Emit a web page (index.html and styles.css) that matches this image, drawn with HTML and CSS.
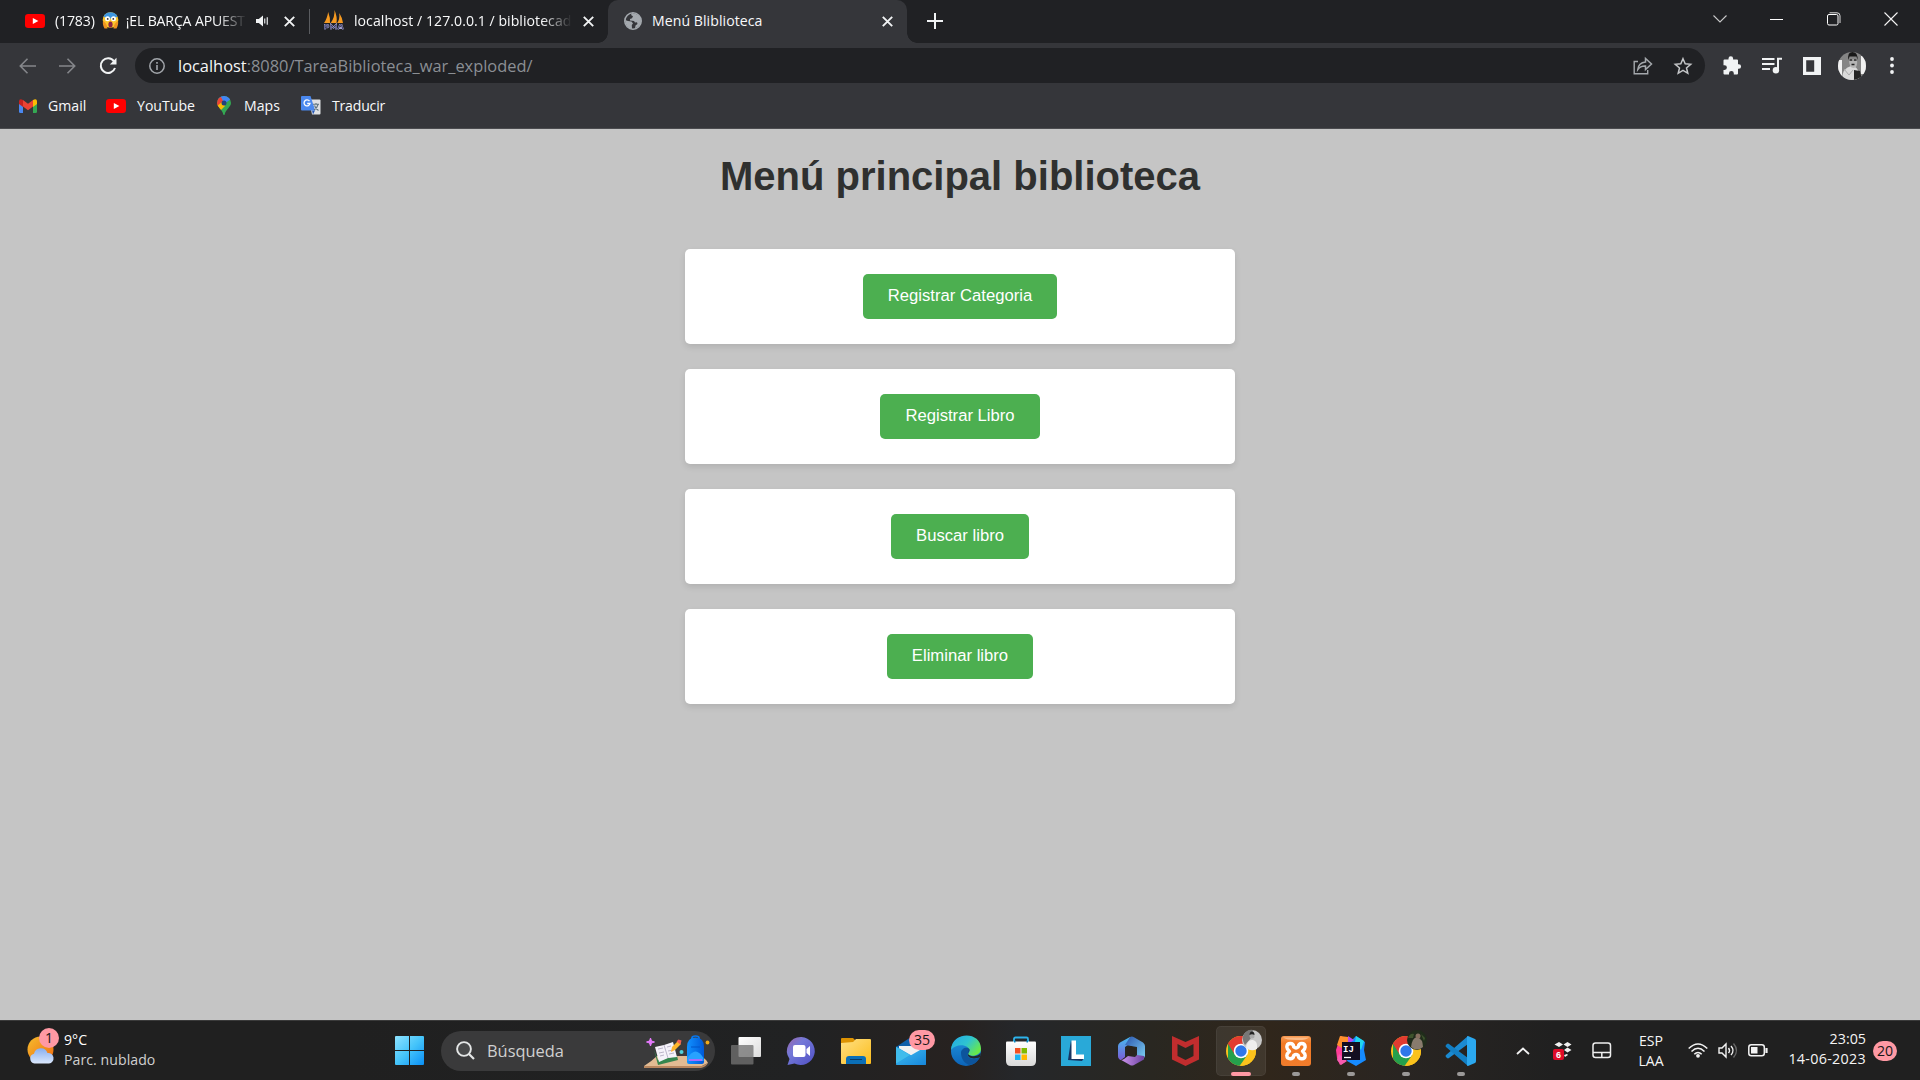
FILE: index.html
```html
<!DOCTYPE html>
<html lang="es">
<head>
<meta charset="utf-8">
<title>Menú Bliblioteca</title>
<link rel="stylesheet" href="styles.css">
</head>
<body>
<svg class="defs" width="0" height="0">
  <defs>
    <linearGradient id="gStart" x1="0" y1="0" x2="1" y2="1"><stop offset="0" stop-color="#8ee3ff"/><stop offset=".5" stop-color="#45c4fa"/><stop offset="1" stop-color="#0a8ff5"/></linearGradient>
    <linearGradient id="gSun" x1="0" y1="0" x2="1" y2="1"><stop offset="0" stop-color="#f5bd2e"/><stop offset="1" stop-color="#f0690f"/></linearGradient>
    <linearGradient id="gCloud" x1="0" y1="0" x2="0" y2="1"><stop offset="0" stop-color="#86aef0"/><stop offset="1" stop-color="#dbe8fc"/></linearGradient>
    <linearGradient id="gChat" x1="0" y1="0" x2="1" y2="1"><stop offset="0" stop-color="#9c66a8"/><stop offset=".35" stop-color="#7479d8"/><stop offset="1" stop-color="#4f4fc4"/></linearGradient>
    <linearGradient id="gFolder" x1="0" y1="0" x2="1" y2="1"><stop offset="0" stop-color="#ffe084"/><stop offset="1" stop-color="#fcbd1c"/></linearGradient>
    <linearGradient id="gMail" x1="0" y1="0" x2="1" y2="1"><stop offset="0" stop-color="#43c1ef"/><stop offset="1" stop-color="#1686dc"/></linearGradient>
    <linearGradient id="gEdgeA" x1="0" y1="0" x2="1" y2=".6"><stop offset="0" stop-color="#22a7e6"/><stop offset=".55" stop-color="#2fc4d0"/><stop offset="1" stop-color="#68e84a"/></linearGradient>
    <linearGradient id="gEdgeB" x1="0" y1="0" x2="0" y2="1"><stop offset="0" stop-color="#2196dd"/><stop offset="1" stop-color="#0c64b8"/></linearGradient>
    <linearGradient id="gBag" x1="0" y1="0" x2="0" y2="1"><stop offset="0" stop-color="#ffffff"/><stop offset="1" stop-color="#d9d9d9"/></linearGradient>
    <linearGradient id="gM1" x1="0" y1="0" x2="0" y2="1"><stop offset="0" stop-color="#46bdf0"/><stop offset="1" stop-color="#7a5bd6"/></linearGradient>
    <linearGradient id="gM2" x1="0" y1="0" x2="1" y2="1"><stop offset="0" stop-color="#2a55ae"/><stop offset="1" stop-color="#7fd2f5"/></linearGradient>
    <linearGradient id="gM3" x1="0" y1="0" x2="1" y2="0"><stop offset="0" stop-color="#d49af2"/><stop offset="1" stop-color="#6a419f"/></linearGradient>
    <linearGradient id="gXampp" x1="0" y1="0" x2="0" y2="1"><stop offset="0" stop-color="#f79b55"/><stop offset=".25" stop-color="#f37a24"/><stop offset="1" stop-color="#f07c2c"/></linearGradient>
    <linearGradient id="gView" x1="0" y1="0" x2="1" y2="1"><stop offset="0" stop-color="#ffffff"/><stop offset="1" stop-color="#dcdcdc"/></linearGradient>
    <linearGradient id="gPack" x1="0" y1="0" x2="1" y2="0"><stop offset="0" stop-color="#1191ff"/><stop offset="1" stop-color="#0059d8"/></linearGradient>
    <clipPath id="round30"><circle cx="15" cy="15" r="15"/></clipPath>
    <symbol id="youtube" viewBox="0 0 20 14"><rect width="20" height="14" rx="3.2" fill="#f00"/><path d="M7.8 3.9v6.2L13.4 7z" fill="#fff"/></symbol>
    <symbol id="close" viewBox="0 0 11 11"><path d="M.8.8l9.4 9.4M10.2.8L.8 10.2" stroke="#f1f3f4" stroke-width="1.9" fill="none"/></symbol>
    <symbol id="chrome" viewBox="0 0 30 30">
      <g clip-path="url(#round30)">
        <rect width="30" height="30" fill="#fbc21c"/>
        <path d="M15 15L2 7.5V30H13.500L21.500 18.750z" fill="#25a04c"/>
        <path d="M15 15L21.500 18.750L14.500 31H30V8H15z" fill="#fbc21c"/>
        <path d="M0 0H30V8.200H15L8.700 18.400L1.500 7z" fill="#e23b30"/>
      </g>
      <circle cx="15" cy="15" r="7.300" fill="#fff"/><circle cx="15" cy="15" r="5.700" fill="#2f77ea"/>
    </symbol>
  </defs>
</svg>

<header class="browser">
  <div class="tabs">
    <div class="tab tab-first">
      <svg width="20" height="14"><use href="#youtube"/></svg>
      <div class="tab-title fade title-video"><span>(1783)</span>
        <svg class="emoji" width="17" height="17" viewBox="0 0 17 17"><circle cx="8.500" cy="8" r="7.800" fill="#fcc62c"/><path d="M1.500 4.500A8 8 0 0 1 15.500 4.500L12 6.500H5z" fill="#3e97e0"/><circle cx="5.500" cy="6.700" r="2.500" fill="#fff"/><circle cx="11.500" cy="6.700" r="2.500" fill="#fff"/><circle cx="5.700" cy="6.900" r=".9" fill="#333"/><circle cx="11.300" cy="6.900" r=".9" fill="#333"/><ellipse cx="8.500" cy="12.500" rx="2.100" ry="3" fill="#8d2544"/><path d="M1 9c2 1 4 3 4.500 7.500H2.500C1 14 .5 11 1 9zM16 9c-2 1-4 3-4.500 7.500h3C16 14 16.500 11 16 9z" fill="#ef9420"/></svg>
        <span>¡EL BARÇA APUEST</span></div>
      <svg class="audio" width="13" height="12" viewBox="0 0 13 12"><path d="M0 4h2.800L7 .5v11L2.800 8H0z" fill="#f1f3f4"/><path d="M8.700 3.500v5M11.300 2.200v7.600" stroke="#c8cacc" stroke-width="1.400"/></svg>
      <svg class="tab-close" width="11" height="11"><use href="#close"/></svg>
    </div>
    <div class="tab tab-second">
      <svg width="22" height="22" viewBox="0 0 22 22"><path d="M1 13Q4 9 5.200 2Q7.500 8 7 13zM7.700 13Q12 7 11.500 0Q14.500 7 13.500 13zM14.200 13Q17 9 16.300 3Q19.500 8 20 13z" fill="#f69a21"/><path d="M2 19.500v-4.700h2.500q2 1.400 0 2.500H2M8 19.500v-4.700l2.500 2.800 2.500-2.800v4.700M15 19.500l2-4.700h1.500l1.500 4.700M16 18h3" fill="none" stroke="#a5a5cf" stroke-width="1.800"/><path d="M2 19.500v-4.700h2.500q2 1.400 0 2.500H2M8 19.500v-4.700l2.500 2.800 2.500-2.800v4.700M15 19.500l2-4.700h1.500l1.500 4.700" fill="none" stroke="#2b2b58" stroke-width=".9"/></svg>
      <div class="tab-title fade title-admin">localhost / 127.0.0.1 / bibliotecad</div>
      <svg class="tab-close" width="11" height="11"><use href="#close"/></svg>
    </div>
    <div class="tab tab-active">
      <svg width="18" height="18" viewBox="0 0 18 18"><circle cx="9" cy="9" r="8.200" fill="#35363a" stroke="#a4a9ae" stroke-width="1.600"/><path d="M1 8l3 1 3.500.5 1.500 2-1.200 1.500.2 4Q2 16 1 8zM8 1l-1 2 2 1.300-1 2-2 .7v1.500l4 .5 1 1.500 2-.2.500 1.700-2 1.500-.5 3Q17 14 17 9Q17 2 8 1z" fill="#a4a9ae"/></svg>
      <div class="tab-title title-current">Menú Bliblioteca</div>
      <svg class="tab-close" width="11" height="11"><use href="#close"/></svg>
    </div>
    <svg class="new-tab" width="16" height="16" viewBox="0 0 16 16"><path d="M8 0v16M0 8h16" stroke="#f1f3f4" stroke-width="2"/></svg>
    <div class="window-controls">
      <svg width="14" height="8" viewBox="0 0 14 8"><path d="M.5.500L7 7 13.500.500" fill="none" stroke="#c8c9ca" stroke-width="1.100"/></svg>
      <svg width="14" height="14" viewBox="0 0 14 14"><path d="M0 7.500h13" stroke="#fff"/></svg>
      <svg width="14" height="14" viewBox="0 0 14 14"><rect x=".5" y="2.500" width="10.500" height="10.500" rx="1.500" fill="none" stroke="#fff"/><path d="M2.500.8H10Q13 .8 13 3.800V11" fill="none" stroke="#ddd"/></svg>
      <svg width="14" height="14" viewBox="0 0 14 14"><path d="M.5.500l13 13M13.500.500l-13 13" stroke="#f5f5f5" stroke-width="1.100"/></svg>
    </div>
  </div>

  <div class="toolbar">
    <div class="nav">
      <svg width="17" height="16" viewBox="0 0 17 16"><path d="M17 8H1.500M8.500.8L1.300 8l7.200 7.200" fill="none" stroke="#85878b" stroke-width="1.600"/></svg>
      <svg width="17" height="16" viewBox="0 0 17 16"><path d="M0 8h15.500M8.500.8L15.700 8l-7.200 7.200" fill="none" stroke="#85878b" stroke-width="1.600"/></svg>
      <svg width="18" height="18" viewBox="0 0 18 18"><path d="M15 4.300A7.300 7.300 0 1 0 16 11" fill="none" stroke="#f1f3f4" stroke-width="2"/><path d="M17.500.8v6.700h-6.700z" fill="#f1f3f4"/></svg>
    </div>
    <div class="address">
      <svg width="16" height="16" viewBox="0 0 16 16"><circle cx="8" cy="8" r="7.200" fill="none" stroke="#a2a6ab" stroke-width="1.500"/><path d="M8 7v5M8 4v1.700" stroke="#a2a6ab" stroke-width="1.600"/></svg>
      <div class="url"><span>localhost</span>:8080/TareaBiblioteca_war_exploded/</div>
      <svg class="share" width="20" height="18" viewBox="0 0 20 18"><path d="M5 4.500H1.200v12.200h13.500V13" fill="none" stroke="#a4a8ac" stroke-width="1.400"/><path d="M4.800 12.500Q5.500 5.800 12.500 5V1.500L18.500 7l-6 5.500V9Q7.500 8.700 4.800 12.500z" fill="none" stroke="#a4a8ac" stroke-width="1.500"/></svg>
      <svg width="18" height="18" viewBox="0 0 18 18"><path d="M9 1.700l2.200 5.100 5.500.5-4.200 3.600 1.300 5.400L9 13.400l-4.800 2.900 1.300-5.400L1.300 7.300l5.500-.5z" fill="none" stroke="#c4c6c8" stroke-width="1.500"/></svg>
    </div>
    <div class="actions">
      <svg width="18" height="19" viewBox="0 0 18 19"><path d="M1.500 3.500H5.500V2.500a2.300 2.300 0 0 1 4.600 0v1H14q1 0 1 1V8.200h.8a2.300 2.300 0 0 1 0 4.600H15V17.500q0 1-1 1H10.800v-1.200a2.400 2.400 0 0 0-4.800 0v1.200H1.500q-1 0-1-1V14h1a2.400 2.400 0 0 0 0-4.800h-1V4.500q0-1 1-1z" fill="#f1f3f4"/></svg>
      <svg width="20" height="17" viewBox="0 0 20 17"><path d="M0 2h12.500M0 7h12.500M0 12h8" stroke="#f1f3f4" stroke-width="2"/><path d="M16 13V1.800h4" fill="none" stroke="#f1f3f4" stroke-width="2"/><circle cx="13.900" cy="13.200" r="3.200" fill="#f1f3f4"/></svg>
      <svg width="18" height="18" viewBox="0 0 18 18"><path fill-rule="evenodd" d="M0 0h18v18H0zM3.200 3.200v11.600h8V3.200z" fill="#f1f3f4"/></svg>
      <svg width="28" height="28" viewBox="0 0 28 28"><defs><clipPath id="avatar"><circle cx="14" cy="14" r="14"/></clipPath></defs><g clip-path="url(#avatar)"><rect width="28" height="28" fill="#858585"/><path d="M0 8h4v20H0zM23 4h5v18h-5z" fill="#f1f1f1"/><path d="M4 28q0-12 9-14 8-1 9 14z" fill="#dadada"/><path d="M11 7q0 9 4.500 9T19 7z" fill="#b5b5b5"/><path d="M10.500 8Q9 0 14.500 0 20 0 19.500 8l-1-3.500h-7z" fill="#181818"/><path d="M11.500 8h2.800M15.800 8h2.800M13.500 12.500h3" stroke="#222" stroke-width="1.500"/><path d="M16 18l6 1 2 9h-8z" fill="#242424"/><path d="M6 17l5 6 4-5" stroke="#aaa" fill="none"/></g></svg>
      <svg width="4" height="17" viewBox="0 0 4 17"><g fill="#f1f3f4"><circle cx="2" cy="2" r="1.900"/><circle cx="2" cy="8.500" r="1.900"/><circle cx="2" cy="15" r="1.900"/></g></svg>
    </div>
  </div>

  <nav class="bookmarks">
    <a class="bm-gmail"><svg width="18" height="14" viewBox="0 0 18 14"><path d="M0 2v10.500Q0 14 1.300 14H4V5z" fill="#4a88f0"/><path d="M18 2v10.500Q18 14 16.700 14H14V5z" fill="#34a853"/><path d="M14 1l2-.8Q18 0 18 2.200V5l-4 3z" fill="#fbbc04"/><path d="M4 1L2 .2Q0 0 0 2.200V5l4 3z" fill="#c5221f"/><path d="M4 1l5 3.800L14 1v6.500l-5 3.800-5-3.800z" fill="#ea4335"/></svg>Gmail</a>
    <a class="bm-youtube"><svg width="20" height="14"><use href="#youtube"/></svg>YouTube</a>
    <a class="bm-maps"><svg width="14" height="19" viewBox="0 0 14 19"><defs><clipPath id="pin"><path d="M7 0A7 7 0 0 1 14 7C14 11 8.500 13.500 7.700 18.500Q7 19.500 6.300 18.500C5.500 13.500 0 11 0 7A7 7 0 0 1 7 0z"/></clipPath></defs><g clip-path="url(#pin)"><rect width="14" height="19" fill="#34a853"/><path d="M0 0h14v3L7 8 0 3z" fill="#4285f4"/><path d="M0 2l4-1 3 6-6 5-3-4z" fill="#ea4335"/><path d="M0 10l5-4 3 4-5 5z" fill="#fbbc04"/></g><circle cx="7" cy="7" r="2.500" fill="#26427a"/></svg>Maps</a>
    <a class="bm-translate"><svg width="20" height="19" viewBox="0 0 20 19"><path d="M8 3.500h10.500q1 0 1 1v13q0 1-1 1H11z" fill="#dfe1e4"/><path d="M12 18.500l-1-4h3z" fill="#2456b5"/><path d="M1 0h8.500l4.700 14.500H1q-1 0-1-1V1q0-1 1-1z" fill="#4a88ee"/><path d="M8.500 5.200A3 3 0 1 0 9 7.500H6.200" fill="none" stroke="#fff" stroke-width="1.300"/><path d="M12 8.200h6M15 7v1.200M17 8.500q-1 4-4 5.500M13.500 9.500q1 3 4 5" stroke="#5f7480" fill="none" stroke-width="1.100"/></svg>Traducir</a>
  </nav>
</header>

<main class="page">
  <h1>Menú principal biblioteca</h1>
  <section class="card"><a class="button">Registrar Categoria</a></section>
  <section class="card"><a class="button">Registrar Libro</a></section>
  <section class="card"><a class="button">Buscar libro</a></section>
  <section class="card"><a class="button">Eliminar libro</a></section>
</main>

<footer class="taskbar">
  <div class="weather">
    <div class="weather-icon">
      <svg width="28" height="30" viewBox="0 0 28 30"><circle cx="13.500" cy="14.500" r="13" fill="url(#gSun)"/><path d="M7.500 28.500a5 5 0 0 1-.5-9.800A7 7 0 0 1 20.500 18a5.300 5.300 0 0 1 1.500 10.500z" fill="url(#gCloud)"/></svg>
      <span class="badge badge-weather">1</span>
    </div>
    <div class="weather-text"><span class="bright">9°C</span><span>Parc. nublado</span></div>
  </div>

  <div class="apps">
    <div class="app"><svg width="29" height="29" viewBox="0 0 29 29"><path d="M0 1q0-1 1-1h13v14H0zM15 0h13q1 0 1 1v13H15zM0 15h14v14H1q-1 0-1-1zM15 15h14v13q0 1-1 1H15z" fill="url(#gStart)"/></svg></div>
    <div class="search">
      <svg width="19" height="19" viewBox="0 0 19 19"><circle cx="8" cy="8" r="6.900" fill="#48494a" stroke="#e4e6e6" stroke-width="1.900"/><path d="M13 13l5 5" stroke="#e4e6e6" stroke-width="2.200"/></svg>
      <span>Búsqueda</span>
      <svg class="school" width="66" height="33" viewBox="0 0 66 33">
        <path d="M0 30Q8 25 13 20H55Q62 22 64 27L58 30z" fill="#e2bb93"/><path d="M0 30H58L64 27Q62 31 57 32H0z" fill="#b9875f"/>
        <path d="M6.500 2l1 3 3 1-3 1-1 3-1-3-3-1 3-1z" fill="#e77bff" stroke="#e77bff"/>
        <path d="M10 14l4 15 20-5-1-4-19 4z" fill="#35864e"/><path d="M11 11l9-2 9-3 4 15-9 1-9 4z" fill="#f5f2fa"/><path d="M20 9l4 13M14 13l5-1M15 17l5-1M16 20l4-1M23 11l4-1M24 15l5-1M25 18l5-1" stroke="#bbb5c9"/>
        <path d="M27 16l1-5 6-6 3 3-6 6z" fill="#ffb52c"/><path d="M32.500 5.500l2-2 3 1-1 4z" fill="#f26151"/>
        <circle cx="37.500" cy="16" r="2" fill="#50d0d9"/><circle cx="63.500" cy="6.500" r="1.900" fill="#eeaa18"/>
        <path d="M48 4V2q0-2 3.500-2T55 2v2" fill="none" stroke="#0877ee" stroke-width="1.700"/><path d="M43 11Q43 1.500 51.500 1.500T60 11V26q0 2-2 2H45q-2 0-2-2z" fill="url(#gPack)"/><path d="M43.500 22q8-13 16 0v3h-16z" fill="#28a2ff"/><path d="M45 24h13" stroke="#a76cff" stroke-width="2"/><path d="M47 11h9" stroke="#0055c8"/>
      </svg>
    </div>
    <div class="app"><svg width="30" height="28" viewBox="0 0 30 28"><rect x="7.500" y="0" width="22.500" height="20" rx="1" fill="url(#gView)"/><rect x="0" y="8" width="22.500" height="19.500" rx="1" fill="#727272" fill-opacity=".78"/></svg></div>
    <div class="app"><svg width="30" height="30" viewBox="0 0 30 30"><path d="M15.500 1A14 14 0 1 1 8.500 27.500L1.500 29 3.500 23A14 14 0 0 1 15.500 1z" fill="url(#gChat)"/><rect x="7" y="9" width="12.500" height="12" rx="2" fill="#fff"/><path d="M20.500 13l3.500-3v10l-3.500-3z" fill="#fff"/></svg></div>
    <div class="app"><svg width="30" height="26" viewBox="0 0 30 26"><path d="M0 1q0-1 1-1h11l2 2v4H0z" fill="#dd9303"/><path d="M0 5l12-1 3-3h14q1 0 1 1v23q0 1-1 1H1q-1 0-1-1z" fill="url(#gFolder)"/><path d="M5 26v-5q0-3 3-3h14q3 0 3 3v5z" fill="#0b6fb7"/><path d="M9 21.500h12" stroke="#0a3b66"/></svg></div>
    <div class="app"><svg width="30" height="30" viewBox="0 0 30 30"><path d="M0 11L15 1l15 10v5H0z" fill="#0f5fa9"/><path d="M3 10h24v10H3z" fill="#f1f1f1"/><path d="M0 10.500L30 28v.5H0z" fill="#27a2e4"/><path d="M30 10.500L0 28q0 1 1 1h28q1 0 1-1z" fill="url(#gMail)"/><path d="M0 11l14 8L1 27H0z" fill="#40bcec"/></svg><span class="badge badge-mail">35</span></div>
    <div class="app"><svg width="30" height="30" viewBox="0 0 30 30"><circle cx="15" cy="15" r="15" fill="url(#gEdgeB)"/><path d="M0 14C1-5 30-5 30 13c0 6-8 8-12 6-2-1-1-2 0-3 2-7-12-10-18-2z" fill="url(#gEdgeA)"/><path d="M10 17c0-4 4-6 7-5 3 2 1 4 0 6-2 4 6 7 12 3-2 5-7 8-11 8-5-2-8-7-8-12z" fill="#0d549c"/><path d="M17.500 12c2 2 0 4-.5 6-1 4 6 6 12 3l1-4c-4 4-9 4-12 2-2-1 1-4-.5-7z" fill="#24272b"/></svg></div>
    <div class="app"><svg width="30" height="30" viewBox="0 0 30 30"><path d="M8 7V3q0-1.500 1.500-1.500h11Q22 1.500 22 3v4" fill="none" stroke="#2db3ec" stroke-width="1.800"/><path d="M0 6.500q0-1 1-1h28q1 0 1 1V25q0 5-5 5H5q-5 0-5-5z" fill="url(#gBag)"/><path d="M8 5.500h1.500M20.500 5.500H22" stroke="#0787c2" stroke-width="2"/><path d="M9 12h5.500v5.500H9z" fill="#f25022"/><path d="M15.500 12H21v5.500h-5.500z" fill="#7fba00"/><path d="M9 18.500h5.500V24H9z" fill="#1bb3f2"/><path d="M15.500 18.500H21V24h-5.500z" fill="#ffb900"/></svg></div>
    <div class="app"><svg width="30" height="30" viewBox="0 0 30 30"><path d="M0 0h30v30H0z" fill="#29a9d8"/><path d="M10 4L7 24l14 1 2-3-10-3z" fill="#173562"/><path d="M10.500 4.500H15V18.500h8V23H10.500z" fill="#fff"/></svg></div>
    <div class="app"><svg width="30" height="30" viewBox="0 0 30 30"><path d="M14 1L4 6.500Q2 8 2 10V20Q2 23 5 24l4-3V11L19 4z" fill="url(#gM1)"/><path d="M14 1q2-1 4 .2L27 6.500Q29 8 29 10V20l-2 4-6-4V11L9 9z" fill="url(#gM2)"/><path d="M3.500 23Q5 25 8 23l4-3 7 1 2-2 7 1q1 2-1 4l-9 5q-2 1-4 0z" fill="url(#gM3)"/><path d="M15 10l4.500 2.500v5L15 20l-4.500-2.500v-5z" fill="#2a231c"/></svg></div>
    <div class="app"><svg width="27" height="30" viewBox="0 0 27 30"><path d="M0 0l13.500 6L27 0v23.500L13.500 30 0 23.500zM5.500 8v12l8 4 8-4V8l-8 4z" fill="#c12d2e" fill-rule="evenodd"/></svg></div>
    <div class="app app-open app-current"><svg width="30" height="30"><use href="#chrome"/></svg><svg class="account" width="20" height="20" viewBox="0 0 20 20"><circle cx="10" cy="10" r="10" fill="#c8c8c8"/><path d="M2 4q4-5 9-4l-2 8-6 7Q-1 9 2 4z" fill="#777"/><path d="M4 18q1-9 7-8 5 1 4 9-6 3-11-1z" fill="#eee"/><circle cx="10" cy="6" r="2.500" fill="#aaa"/><path d="M7.500 5q0-3.500 2.500-3.500t2.500 3.500q-2.500-1.500-5 0z" fill="#222"/></svg></div>
    <div class="app app-open"><svg width="30" height="30" viewBox="0 0 30 30"><rect width="30" height="30" rx="3" fill="url(#gXampp)"/><path d="M2 1.500h26q-3 3-13 2.500Q5 4 2 1.500z" fill="#ffcfa6" fill-opacity=".7"/><path d="M12.800 11Q12.500 7.500 9.200 7.500T5.800 11Q5.800 13 8.500 15.200Q5.800 17.500 5.800 19.500Q6 22.800 9.200 22.800T12.800 19.300Q15 17.500 17.200 19.300Q17.500 22.800 20.800 22.800T24.200 19.500Q24.200 17.500 21.500 15.200Q24.200 13 24.200 11Q24 7.500 20.800 7.500T17.200 11Q15 12.800 12.800 11z" fill="none" stroke="#fff" stroke-width="3.400" stroke-linejoin="round"/></svg></div>
    <div class="app app-open"><svg width="30" height="30" viewBox="0 0 30 30"><path d="M0 14l2-6 3-8 10 6-6 20-5 3-3-7z" fill="#ff3d98"/><path d="M4 0l8 1 3 5-9 6-5-3z" fill="#ff912e"/><path d="M15 5l5-5 9 6-1 8 2 10-10 6-9-5z" fill="#168bff"/><path d="M20 0l8 5-3 9-6-8z" fill="#21d8ee"/><path d="M12 0l6 4-6 4z" fill="#b94af0"/><path d="M3 18l8 7-6 4-4-5z" fill="#f65bb0"/><path d="M6 6h18v18H6z" fill="#130e20"/><text x="7" y="15.500" class="ij">IJ</text><path d="M8 21.500h7" stroke="#fff" stroke-width="1.300"/></svg></div>
    <div class="app app-open"><svg width="30" height="30"><use href="#chrome"/></svg><svg class="account" width="20" height="20" viewBox="0 0 20 20"><circle cx="10" cy="10" r="10" fill="#202c1b"/><path d="M4 17q1-9 6-10 6 2 6 10-6 5-12 0z" fill="#887b6d"/><circle cx="11" cy="6" r="2.500" fill="#86705f"/><path d="M1 8q2-5 6-4l-1 4zM14 4l4 4-1 3z" fill="#3d542c"/></svg></div>
    <div class="app app-open"><svg width="30" height="30" viewBox="0 0 30 30"><path d="M22 0v8L3 22q-1 .8-2 0l-1-1q-1-1 0-2z" fill="#1b8ad1"/><path d="M22 30v-8L3 8q-1-.8-2 0L0 9q-1 1 0 2z" fill="#137fc4"/><path d="M22 0l7 3q1 .5 1 2v20q0 1.500-1 2l-7 3q-1 0-1-1V1q0-1 1-1z" fill="#2ba8ef"/></svg></div>
  </div>

  <div class="tray">
    <div class="tray-cell"><svg width="14" height="8" viewBox="0 0 14 8"><path d="M1 7l6-5.500L13 7" fill="none" stroke="#f2f2f2" stroke-width="1.800"/></svg></div>
    <div class="tray-cell"><svg width="20" height="20" viewBox="0 0 20 20"><path d="M6 1l4 2.500L6 6 1.500 3.500zM14.500 1l4 2.500-4 2.500-4-2.500zM14.500 6.500l4 2.500-4 2.500L11 9zM11 14l3-1 1 1-3 2z" fill="#f2f2f2"/><rect x="0" y="8" width="11" height="11" rx="2" fill="#df0b28"/><text x="3" y="16.500" class="dropbox-count">6</text></svg></div>
    <div class="tray-cell"><svg width="20" height="17" viewBox="0 0 20 17"><rect x="1" y="1" width="17.500" height="14.500" rx="2.500" fill="none" stroke="#eee" stroke-width="1.500"/><path d="M1 10.500h17.500M9.800 10.500v5" stroke="#eee" stroke-width="1.500"/></svg></div>
    <div class="language"><span>ESP</span><span>LAA</span></div>
    <div class="status">
      <svg width="20" height="15" viewBox="0 0 20 15"><g fill="none" stroke="#f2f2f2" stroke-width="1.500"><path d="M.7 5.500Q10-3.500 19.300 5.500M3.500 8.500Q10 2 16.500 8.500M6.300 11.300Q10 7.500 13.700 11.300"/></g><circle cx="10" cy="12.800" r="1.900" fill="#f2f2f2"/></svg>
      <svg width="20" height="18" viewBox="0 0 20 18"><path d="M1 6h3l4-4v13l-4-4H1z" fill="none" stroke="#f2f2f2" stroke-width="1.400"/><path d="M10.500 6q2 2.500 0 5M13 4q4 4.500 0 9" fill="none" stroke="#f2f2f2" stroke-width="1.400"/><path d="M15.500 1.500q6 7 0 14" fill="none" stroke="#666" stroke-width="1.400"/></svg>
      <svg width="20" height="13" viewBox="0 0 20 13"><rect x=".8" y=".8" width="15.500" height="11" rx="2.500" fill="none" stroke="#f2f2f2" stroke-width="1.500"/><rect x="3" y="3" width="6.500" height="6.500" fill="#f2f2f2"/><path d="M18.500 4v5" stroke="#f2f2f2" stroke-width="2.200"/></svg>
    </div>
    <div class="clock"><span>23:05</span><span class="date">14-06-2023</span></div>
    <span class="badge badge-notifications">20</span>
  </div>
</footer>
</body>
</html>
```
FILE: styles.css
```css
* { box-sizing: border-box; }

body {
  margin: 0;
  width: 1920px;
  height: 1080px;
  overflow: hidden;
  display: flex;
  flex-direction: column;
  font-family: "Open Sans", "Noto Sans", sans-serif;
  font-size: 14.1px;
  color: #f8f9fa;
}

svg { display: block; flex: none; overflow: visible; }
.defs { position: absolute; }

/* Browser chrome */
.browser { height: 129px; background: #35363a; border-bottom: 1px solid #4b4c4f; }
.tabs { display: flex; height: 43px; background: #202124; }
.tab { display: flex; align-items: center; height: 43px; padding-bottom: 1px; }
.tab-first { width: 310px; padding-left: 25px; position: relative; }
.tab-first::after { content: ""; position: absolute; right: 0; top: 9px; width: 1px; height: 25px; background: #5a5c60; }
.tab-second { width: 298px; padding-left: 13px; }
.tab-active { width: 299px; padding-left: 16px; background: #35363a; border-radius: 10px 10px 0 0; position: relative; }
.tab-active::before, .tab-active::after {
  content: ""; position: absolute; bottom: 0; width: 10px; height: 10px;
}
.tab-active::before { left: -10px; background: radial-gradient(circle at 0 0, #202124 9.500px, #35363a 10px); }
.tab-active::after { right: -10px; background: radial-gradient(circle at 100% 0, #202124 9.500px, #35363a 10px); }
.tab-title { display: flex; align-items: center; white-space: pre; height: 24px; margin-bottom: 1px; }
.fade { -webkit-mask-image: linear-gradient(90deg, #000 calc(100% - 30px), transparent); mask-image: linear-gradient(90deg, #000 calc(100% - 30px), transparent); }
.title-video { width: 192px; margin-left: 10px; gap: 7px; letter-spacing: -.15px; }
.title-admin { width: 218px; margin-left: 9px; letter-spacing: .04px; }
.title-current { width: 210px; margin-left: 10px; letter-spacing: .06px; }
.audio { margin-left: 9px; }
.tab-first .tab-close { margin-left: 15px; }
.tab-second .tab-close { margin-left: 11px; }
.tab-active .tab-close { margin-left: 20px; }
.new-tab { margin: 13px 0 0 20px; }
.window-controls { display: flex; align-items: center; gap: 43px; margin: 0 22px 6px auto; }

.toolbar { display: flex; align-items: center; height: 45px; }
.nav { display: flex; align-items: center; gap: 23px; width: 135px; padding-left: 19px; }
.address { display: flex; align-items: center; width: 1570px; height: 35px; padding: 0 13px 0 14px; border-radius: 18px; background: #202124; }
.url { margin-left: 13px; font-size: 16.400px; color: #8b8f94; white-space: nowrap; }
.url span { color: #f5f6f7; }
.share { margin: 0 21px 0 auto; }
.actions { display: flex; align-items: center; margin-left: 18px; gap: 21px; }
.actions svg:nth-child(4) { margin: 0 3px 0 -4px; }

.bookmarks { display: flex; align-items: center; height: 35px; padding-left: 19px; }
.bookmarks a { display: flex; align-items: center; gap: 11px; }
.bm-gmail { width: 87px; }
.bm-youtube { width: 111px; }
.bm-maps.bm-maps { width: 84px; gap: 13px; }
.bm-translate { letter-spacing: -.2px; }

/* Library menu */
.page { flex: 1; display: flex; flex-direction: column; align-items: center; background: #c5c5c5; font-family: Arial, "Liberation Sans", sans-serif; }
.page h1 { margin: 25px 0 50px; font-size: 40px; line-height: 45px; color: #2f302f; }
.card { display: flex; justify-content: center; width: 550px; height: 95px; margin-bottom: 25px; padding-top: 25px; background: #fff; border-radius: 5px; box-shadow: 0 3px 6px rgba(0, 0, 0, .1); }
.button { height: 45px; padding: 12px 25px 0; border-radius: 5px; background: #4caf50; color: #fff; font-size: 16.670px; line-height: 19px; }

/* Taskbar */
.taskbar { display: flex; height: 60px; background: linear-gradient(90deg, #202020 18%, #212223 42%, #272220 50%, #25272a 53%, #292721 60%, #30261b 66%, #292522 73%, #202020 81%); border-top: 1px solid #3a3a3a; color: #d0d0d0; }
.badge { display: flex; align-items: center; justify-content: center; height: 20px; border-radius: 10px; background: #ff99a4; color: #171717; }
.weather { display: flex; align-items: center; width: 382px; padding: 0 0 2px 27px; }
.weather-icon { position: relative; margin-right: 9px; }
.badge-weather { position: absolute; left: 12px; top: -7px; width: 20px; }
.weather-text { display: flex; flex-direction: column; line-height: 20px; letter-spacing: .06px; }
.bright { color: #fff; }
.apps { display: flex; align-items: center; }
.app { position: relative; display: flex; align-items: center; justify-content: center; width: 55px; height: 50px; }
.search { display: flex; align-items: center; width: 274px; height: 40px; margin: 0 3px 0 4px; padding-left: 15px; border-radius: 20px; background: #3a3a3b; font-size: 16.400px; }
.search span { margin-left: 12px; }
.school { margin: 3px 5px 0 auto; }
.badge-mail { position: absolute; left: 26px; top: 4px; width: 26px; }
.app-open::after { content: ""; position: absolute; bottom: 0; width: 8px; height: 4px; border-radius: 2px; background: #9b9998; }
.app-current::before { content: ""; position: absolute; inset: 0 2px 0 3px; border-radius: 5px; background: rgba(255, 255, 255, .08); border: 1px solid rgba(255, 255, 255, .05); }
.app-current > svg { position: relative; }
.app-current::after { width: 20px; background: #ff99a4; }
.app .account { position: absolute; left: 29px; top: 4px; }
.ij { font: bold 9px "Liberation Mono", monospace; fill: #fff; }
.dropbox-count { font: bold 9px "Liberation Sans", sans-serif; fill: #fff; }
.tray { display: flex; align-items: center; margin-left: auto; padding-right: 23px; color: #f5f5f5; }
.tray-cell { display: flex; justify-content: center; width: 39.500px; }
.language { width: 58px; display: flex; flex-direction: column; align-items: center; line-height: 20px; }
.status { display: flex; align-items: center; gap: 10px; margin-left: 8px; }
.clock { display: flex; flex-direction: column; align-items: flex-end; width: 98px; padding-bottom: 3px; line-height: 20px; font-size: 14.300px; }
.date { letter-spacing: .3px; }
.badge-notifications { width: 24px; margin-left: 7px; }
```
